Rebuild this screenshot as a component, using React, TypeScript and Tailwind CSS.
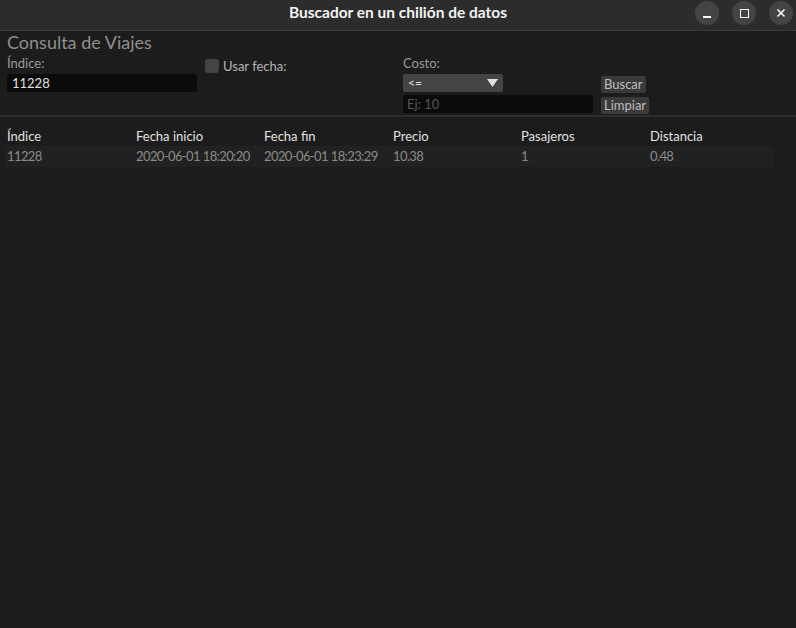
import React from "react";

const font = { fontFamily: "Lato, 'Noto Sans', sans-serif" };

export default function App() {
  const cols = ["Índice", "Fecha inicio", "Fecha fin", "Precio", "Pasajeros", "Distancia"];
  const row = ["11228", "2020-06-01 18:20:20", "2020-06-01 18:23:29", "10.38", "1", "0.48"];
  const widths = ["w-[129px]", "w-[128px]", "w-[129px]", "w-[128px]", "w-[129px]", "w-[122px]"];
  return (
    <div className="w-[796px] h-[628px] bg-[#1c1c1c] flex flex-col overflow-hidden" style={font}>
      {/* Title bar */}
      <div className="h-[31px] bg-[#2c2c2c] border-b border-[#3a3a3a] flex items-center relative shrink-0">
        <div className="flex-1 text-center text-[15.5px] font-bold text-[#f2f2f2] leading-none mb-[4px]">
          Buscador en un chilión de datos
        </div>
        <div className="absolute right-[3px] top-[1px] flex gap-[13px]">
          <div className="w-[24px] h-[24px] rounded-full bg-[#444] flex items-center justify-center">
            <div className="w-[8px] h-[1.5px] bg-white mt-[8px]" />
          </div>
          <div className="w-[24px] h-[24px] rounded-full bg-[#444] flex items-center justify-center">
            <div className="w-[9px] h-[9px] border-[1.5px] border-white" />
          </div>
          <div className="w-[24px] h-[24px] rounded-full bg-[#444] flex items-center justify-center">
            <svg width="10" height="10" viewBox="0 0 10 10">
              <path d="M1.5 1.5 L8.5 8.5 M8.5 1.5 L1.5 8.5" stroke="white" strokeWidth="1.5" />
            </svg>
          </div>
        </div>
      </div>

      {/* Form area */}
      <div className="pl-[7px]">
        <div className="text-[18px] text-[#8f8f8f] leading-[22px]">Consulta de Viajes</div>
        <div className="flex">
          <div className="w-[198px] flex flex-col">
            <div className="text-[13px] text-[#9a9a9a] leading-[16px] mt-[2px]">Índice:</div>
            <div className="mt-[3px] w-[190px] h-[18px] bg-[#0b0b0b] rounded-[2px] text-[13px] text-[#e0e0e0] pl-[5px] leading-[18px]">
              11228
            </div>
          </div>
          <div className="w-[198px] flex items-start pt-[6px]">
            <div className="w-[14px] h-[14px] rounded-[3px] bg-[#444]" />
            <div className="ml-[4px] text-[13px] text-[#b5b5b5] leading-[14px]">Usar fecha:</div>
          </div>
          <div className="w-[198px] flex flex-col">
            <div className="text-[13px] text-[#9a9a9a] leading-[16px] mt-[2px]">Costo:</div>
            <div className="mt-[3px] w-[100px] h-[18px] bg-[#444] rounded-[2px] flex items-center justify-between px-[5px]">
              <span className="text-[12px] text-[#e0e0e0] leading-none">&lt;=</span>
              <svg width="11" height="8" viewBox="0 0 11 8">
                <path d="M0 0 L11 0 L5.5 8 Z" fill="#e0e0e0" />
              </svg>
            </div>
            <div className="mt-[3px] w-[190px] h-[18px] bg-[#0b0b0b] rounded-[2px] text-[13px] text-[#555] pl-[4px] leading-[18px]">
              Ej: 10
            </div>
          </div>
          <div className="flex flex-col items-start pt-[23px] gap-[4px]">
            <div className="h-[17px] px-[3px] bg-[#3a3a3a] rounded-[2px] text-[13px] text-[#bdbdbd] leading-[17px]">Buscar</div>
            <div className="h-[17px] px-[3px] bg-[#3a3a3a] rounded-[2px] text-[13px] text-[#bdbdbd] leading-[17px]">Limpiar</div>
          </div>
        </div>
      </div>

      <div className="mt-[1px] h-[2px] bg-[#2e2e2e]" />

      {/* Table */}
      <div className="pl-[5px] pt-[10px] w-[773px]">
        <div className="flex pl-[2px] h-[18px] items-center">
          {cols.map((c, i) => (
            <div key={c} className={`${widths[i]} shrink-0 text-[13px] text-[#e0e0e0] leading-none`}>{c}</div>
          ))}
        </div>
        <div className="flex pl-[2px] h-[21px] items-center bg-[#212121] mt-[1px]">
          {row.map((c, i) => (
            <div key={i} className={`${widths[i]} shrink-0 text-[13px] tracking-[-0.6px] text-[#8a8a8a] leading-none`}>{c}</div>
          ))}
        </div>
      </div>
    </div>
  );
}
